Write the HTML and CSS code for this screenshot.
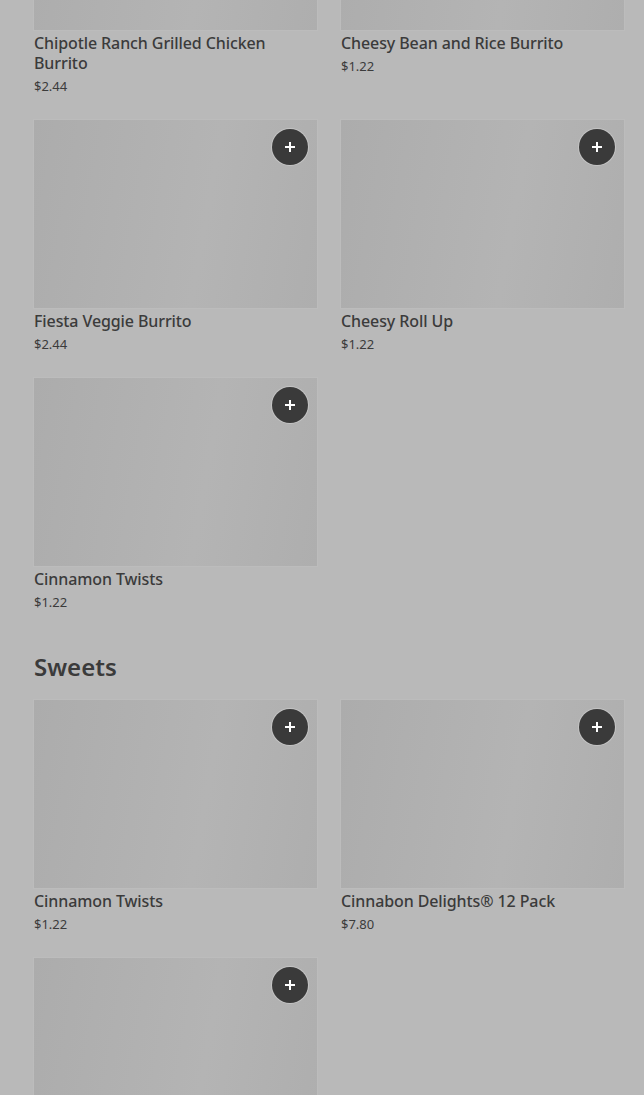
FILE: index.html
```html
<!DOCTYPE html>
<html lang="en">
<head>
<meta charset="utf-8">
<title>Menu</title>
<link rel="stylesheet" href="styles.css">
</head>
<body>
<main class="page">
  <section class="section first">
    <div class="grid">
      <div class="card">
        <div class="thumb"><button class="add" aria-label="Add"><svg viewBox="0 0 12 12" width="12" height="12"><path d="M6 1v10M1 6h10" stroke="#fff" stroke-width="2"/></svg></button></div>
        <div class="name">Chipotle Ranch Grilled Chicken Burrito</div>
        <div class="price">$2.44</div>
      </div>
      <div class="card">
        <div class="thumb"><button class="add" aria-label="Add"><svg viewBox="0 0 12 12" width="12" height="12"><path d="M6 1v10M1 6h10" stroke="#fff" stroke-width="2"/></svg></button></div>
        <div class="name">Cheesy Bean and Rice Burrito</div>
        <div class="price">$1.22</div>
      </div>
      <div class="card">
        <div class="thumb"><button class="add" aria-label="Add"><svg viewBox="0 0 12 12" width="12" height="12"><path d="M6 1v10M1 6h10" stroke="#fff" stroke-width="2"/></svg></button></div>
        <div class="name">Fiesta Veggie Burrito</div>
        <div class="price">$2.44</div>
      </div>
      <div class="card">
        <div class="thumb"><button class="add" aria-label="Add"><svg viewBox="0 0 12 12" width="12" height="12"><path d="M6 1v10M1 6h10" stroke="#fff" stroke-width="2"/></svg></button></div>
        <div class="name">Cheesy Roll Up</div>
        <div class="price">$1.22</div>
      </div>
      <div class="card">
        <div class="thumb"><button class="add" aria-label="Add"><svg viewBox="0 0 12 12" width="12" height="12"><path d="M6 1v10M1 6h10" stroke="#fff" stroke-width="2"/></svg></button></div>
        <div class="name">Cinnamon Twists</div>
        <div class="price">$1.22</div>
      </div>
    </div>
  </section>
  <section class="section">
    <h2 class="heading">Sweets</h2>
    <div class="grid">
      <div class="card">
        <div class="thumb"><button class="add" aria-label="Add"><svg viewBox="0 0 12 12" width="12" height="12"><path d="M6 1v10M1 6h10" stroke="#fff" stroke-width="2"/></svg></button></div>
        <div class="name">Cinnamon Twists</div>
        <div class="price">$1.22</div>
      </div>
      <div class="card">
        <div class="thumb"><button class="add" aria-label="Add"><svg viewBox="0 0 12 12" width="12" height="12"><path d="M6 1v10M1 6h10" stroke="#fff" stroke-width="2"/></svg></button></div>
        <div class="name">Cinnabon Delights® 12 Pack</div>
        <div class="price">$7.80</div>
      </div>
      <div class="card">
        <div class="thumb"><button class="add" aria-label="Add"><svg viewBox="0 0 12 12" width="12" height="12"><path d="M6 1v10M1 6h10" stroke="#fff" stroke-width="2"/></svg></button></div>
      </div>
    </div>
  </section>
</main>
</body>
</html>
```

FILE: styles.css
```css
html, body {
  margin: 0;
  padding: 0;
  background: #b9b9b9;
  overflow: hidden;
}
body {
  font-family: "Noto Sans", "Open Sans", sans-serif;
  color: #3b3b3b;
}
.page {
  padding: 0 20px 0 34px;
}
.section.first {
  margin-top: -158px;
}
.grid {
  display: grid;
  grid-template-columns: 283px 283px;
  column-gap: 24px;
  row-gap: 24px;
}
.card {
  display: flex;
  flex-direction: column;
}
.thumb {
  position: relative;
  height: 188px;
  background: linear-gradient(100deg, #acacac 0%, #b2b2b2 45%, #b4b4b4 60%, #aeaeae 100%);
  box-shadow: 0 0 0 1px #bcbcbc;
}
.add {
  position: absolute;
  top: 9px;
  right: 9px;
  width: 36px;
  height: 36px;
  border-radius: 50%;
  border: none;
  padding: 0;
  background: #3a3a3a;
  box-shadow: 0 0 0 1px #c4c4c4;
  display: flex;
  align-items: center;
  justify-content: center;
}
.name {
  margin-top: 3px;
  font-size: 16px;
  line-height: 20px;
  font-weight: 500;
  letter-spacing: -0.1px;
}
.price {
  margin-top: 3px;
  font-size: 13px;
  line-height: 20px;
}
.heading {
  margin: 39px 0 17px;
  font-size: 24px;
  line-height: 32px;
  font-weight: 600;
}
```
